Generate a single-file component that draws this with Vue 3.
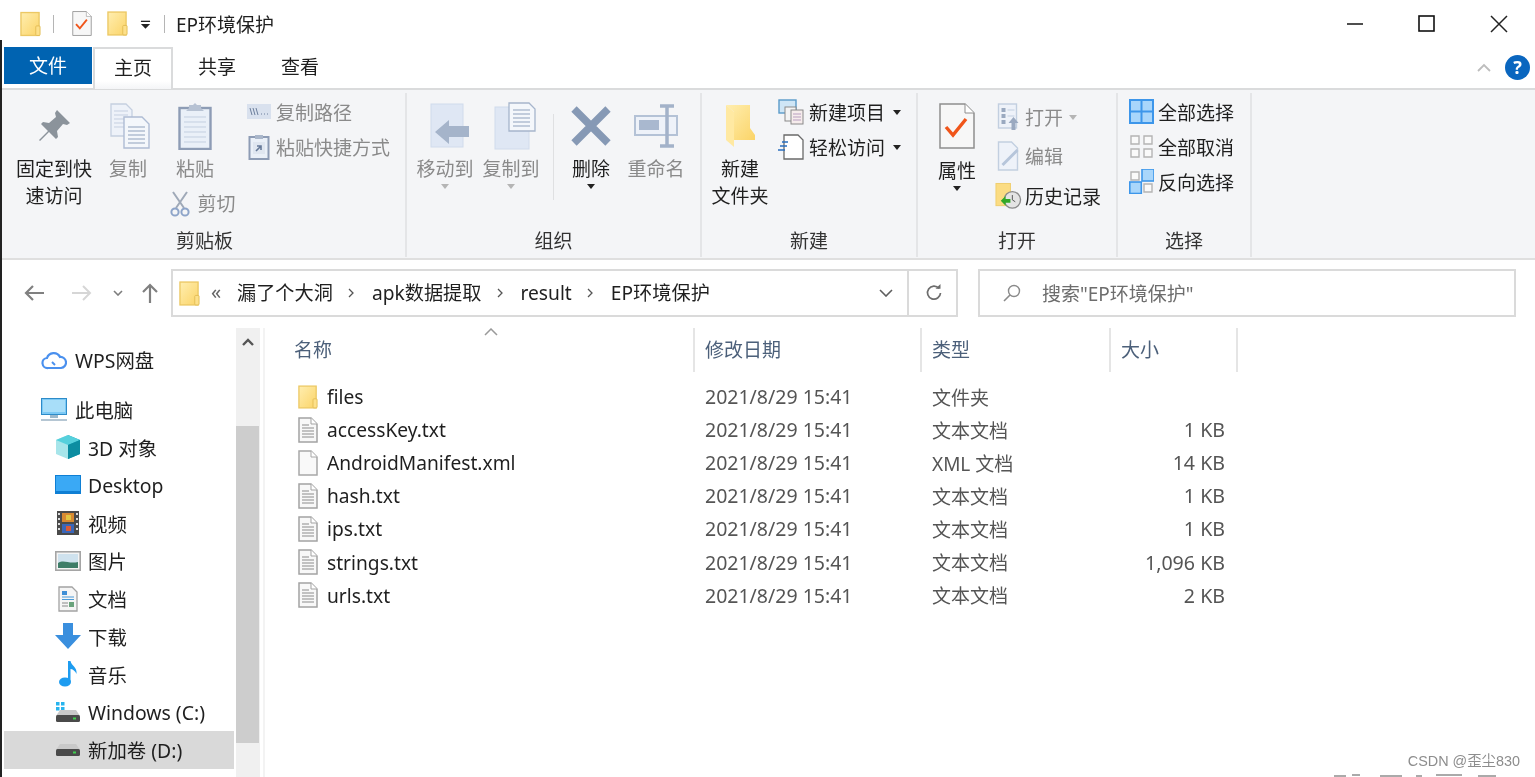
<template>
  <div class="explorer">
    <svg class="defs" width="0" height="0">
      <defs>
        <linearGradient id="folderFill" x1="0" y1="0" x2="1" y2="1">
          <stop offset="0" stop-color="#ffeeb0" />
          <stop offset="1" stop-color="#fbd468" />
        </linearGradient>
        <symbol id="folder" viewBox="0 0 22 26">
          <rect x="1" y="1" width="19" height="24" fill="url(#folderFill)" stroke="#ecc864" stroke-width="1.4" />
          <rect x="16.5" y="15" width="4.5" height="10" rx="1" fill="#fde08a" stroke="#e3bd55" stroke-width="1" />
        </symbol>
        <symbol id="textfile" viewBox="0 0 20 26">
          <path d="M1 1h12l6 6v18H1z" fill="#f8f8f8" stroke="#a3a3a3" stroke-width="1.5" />
          <path d="M13 1v6h6" fill="#fff" stroke="#a3a3a3" />
          <path d="M4 8h7M4 11h12M4 14h12M4 17h12M4 20h12" stroke="#8b8b8b" stroke-width="1.2" />
        </symbol>
        <symbol id="blankfile" viewBox="0 0 20 26">
          <path d="M1 1h12l6 6v18H1z" fill="#f9f9f9" stroke="#a8a8a8" stroke-width="1.5" />
          <path d="M13 1v6h6" fill="#fff" stroke="#a8a8a8" />
        </symbol>
        <symbol id="propsheet" viewBox="0 0 36 46">
          <path d="M1 1h25l9 9v35H1z" fill="#f7f7f7" stroke="#8e8e8e" stroke-width="1.5" />
          <path d="M26 1v9h9" fill="#fff" stroke="#8e8e8e" />
          <path d="M7 24l7 8L27 16" fill="none" stroke="#f0551a" stroke-width="3.4" />
        </symbol>
        <symbol id="drive" viewBox="0 0 26 14">
          <path d="M5 1h16l4 6H1z" fill="#c9c9c9" />
          <rect x="1" y="6" width="24" height="7" rx="1.5" fill="#4a4a4a" />
          <rect x="18" y="8.5" width="3" height="2" fill="#3ecf4e" />
        </symbol>
      </defs>
    </svg>

    <header class="titlebar">
      <div class="qat">
        <svg class="ic-folder-qat"><use href="#folder" /></svg>
        <i class="qat-sep"></i>
        <svg class="ic-prop-qat"><use href="#propsheet" /></svg>
        <svg class="ic-folder-qat2"><use href="#folder" /></svg>
        <svg class="ic-qat-more" viewBox="0 0 12 10"><path d="M1 1h10" stroke="#222" stroke-width="1.4" /><path d="M1 4h10L6 9z" fill="#222" /></svg>
        <i class="qat-sep second"></i>
        <span class="win-title">EP环境保护</span>
      </div>
      <div class="win-btns">
        <svg viewBox="0 0 24 24"><path d="M0 12h16" stroke="#222" stroke-width="1.6" /></svg>
        <svg viewBox="0 0 24 24"><rect x="4" y="4" width="15" height="15" fill="none" stroke="#111" stroke-width="1.6" /></svg>
        <svg viewBox="0 0 24 24"><path d="M4 4l16 16M20 4L4 20" stroke="#222" stroke-width="1.5" /></svg>
      </div>
    </header>

    <nav class="tabs">
      <span class="tab-file">文件</span>
      <span class="tab-home">主页</span>
      <span class="tab-share">共享</span>
      <span class="tab-view">查看</span>
      <div class="tabs-right">
        <svg class="ic-collapse" viewBox="0 0 16 10"><path d="M2 8l6-6 6 6" fill="none" stroke="#bdbdbd" stroke-width="1.8" /></svg>
        <span class="help">?</span>
      </div>
    </nav>

    <section class="ribbon">
      <div class="group g-clipboard">
        <div class="group-body">
          <div class="big b-pin">
            <div class="big-icon">
              <svg width="36" height="36" viewBox="0 0 36 36"><path d="M21 2l13 13-3 2-4-1-6 7 1 6-2 2-7-7-9 9-1-1 9-9-7-7 2-2 6 1 7-6-1-4z" fill="#8b939b" /></svg>
            </div>
            <span>固定到快<br />速访问</span>
          </div>
          <div class="big b-copy off">
            <div class="big-icon">
              <svg width="40" height="46" viewBox="0 0 40 46">
                <path d="M1 1h15l6 6v26H1z" fill="#eef2f9" stroke="#c5cfe0" stroke-width="1.3" />
                <path d="M4 8h14M4 12h14M4 16h14M4 20h14M4 24h14" stroke="#c5cfe0" />
                <path d="M14 14h18l7 7v24H14z" fill="#f4f7fb" stroke="#aebcd4" stroke-width="1.4" />
                <path d="M18 24h17M18 28h17M18 32h17M18 36h17M18 40h17" stroke="#8fa1bc" />
              </svg>
            </div>
            <span>复制</span>
          </div>
          <div class="big b-paste off">
            <div class="big-icon">
              <svg width="34" height="48" viewBox="0 0 34 48">
                <rect x="1.5" y="6" width="31" height="41" fill="#eaf0f8" stroke="#8d9cb5" stroke-width="2.4" />
                <path d="M11 6V3h4l2-2 2 2h4v3l3 3H8z" fill="#b7c2d3" />
                <path d="M6 15h22M6 20h22M6 25h22M6 30h22M6 35h22M6 40h22" stroke="#c3cfe0" />
              </svg>
            </div>
            <span>粘贴</span>
            <div class="cut">
              <svg width="20" height="26" viewBox="0 0 20 26">
                <path d="M3 1l11 16M17 1L6 17" stroke="#9fa9b8" stroke-width="2" />
                <circle cx="5" cy="21" r="3.6" fill="none" stroke="#8da4c9" stroke-width="2" />
                <circle cx="15" cy="21" r="3.6" fill="none" stroke="#8da4c9" stroke-width="2" />
              </svg>
              <span>剪切</span>
            </div>
          </div>
          <div class="small-col col-clip off">
            <div class="mini">
              <svg width="24" height="16" viewBox="0 0 24 16"><rect width="24" height="15" fill="#d9e1ee" /><path d="M3 4l2 7M6 4l2 7M9 4l2 7" stroke="#6d7f9c" /><path d="M14 10h1M17 10h1M20 10h1" stroke="#6d7f9c" /></svg>
              <span>复制路径</span>
            </div>
            <div class="mini">
              <svg width="22" height="26" viewBox="0 0 22 26"><rect x="1.5" y="3" width="19" height="22" fill="#eaf0f8" stroke="#8d9cb5" stroke-width="2" /><rect x="7" y="1" width="8" height="4" fill="#a9b6ca" /><rect x="5" y="8" width="12" height="12" fill="#dfe6f0" /><path d="M8 17l5-5M9 12h4v4" stroke="#667a99" stroke-width="1.6" fill="none" /></svg>
              <span>粘贴快捷方式</span>
            </div>
          </div>
        </div>
        <div class="group-label">剪贴板</div>
      </div>

      <div class="group g-organize">
        <div class="group-body">
          <div class="big b-move off">
            <div class="big-icon">
              <svg width="42" height="46" viewBox="0 0 42 46">
                <rect x="1" y="1" width="32" height="43" fill="#dfe7f4" stroke="#d0dbec" />
                <path d="M20 21v6h20v11H20v7L6 33z" transform="translate(-1 -4)" fill="#a5b4ca" />
              </svg>
            </div>
            <span>移动到</span>
            <i class="caret grey"></i>
          </div>
          <div class="big b-copyto off">
            <div class="big-icon">
              <svg width="42" height="48" viewBox="0 0 42 48">
                <rect x="1" y="5" width="34" height="42" fill="#dfe7f4" stroke="#d0dbec" />
                <path d="M15 1h20l6 6v22H15z" fill="#f4f7fb" stroke="#a6b5cc" stroke-width="1.3" />
                <path d="M19 8h17M19 12h17M19 16h17M19 20h17M19 24h17" stroke="#8fa1bc" />
              </svg>
            </div>
            <span>复制到</span>
            <i class="caret grey"></i>
          </div>
          <i class="vsep"></i>
          <div class="big b-delete">
            <div class="big-icon">
              <svg width="42" height="42" viewBox="0 0 42 42"><path d="M4 4l34 34M38 4L4 38" stroke="#8699b5" stroke-width="7.5" /></svg>
            </div>
            <span>删除</span>
            <i class="caret"></i>
          </div>
          <div class="big b-rename off">
            <div class="big-icon">
              <svg width="46" height="44" viewBox="0 0 46 44">
                <rect x="2" y="12" width="42" height="19" fill="#eef2f9" stroke="#b4c2d6" stroke-width="2" />
                <rect x="6" y="16" width="20" height="10" fill="#a9b8cf" />
                <path d="M27 2h14M27 42h14M34 2v40" stroke="#a3b2c9" stroke-width="3.5" />
              </svg>
            </div>
            <span>重命名</span>
          </div>
        </div>
        <div class="group-label">组织</div>
      </div>

      <div class="group g-new">
        <div class="group-body">
          <div class="big b-newfolder">
            <div class="big-icon">
              <svg width="31" height="44" viewBox="0 0 31 44">
                <path d="M1 1h24v23l5 7v5H9V8z" fill="url(#folderFill)" />
                <path d="M1 1l8 7v35l-8-7z" fill="#ffe9a2" />
              </svg>
            </div>
            <span>新建<br />文件夹</span>
          </div>
          <div class="small-col col-new">
            <div class="mini">
              <svg width="26" height="26" viewBox="0 0 26 26">
                <rect x="1" y="1" width="17" height="13" fill="#cfe6f6" stroke="#5a9bc9" stroke-width="1.4" />
                <rect x="7" y="8" width="11" height="14" fill="#f4f4f4" stroke="#8a8a8a" />
                <rect x="13" y="11" width="12" height="14" fill="#f6ecec" stroke="#8a8a8a" />
                <path d="M15 15h8M15 18h8M15 21h8" stroke="#b89ec0" />
              </svg>
              <span>新建项目</span>
              <i class="caret inline"></i>
            </div>
            <div class="mini">
              <svg width="26" height="26" viewBox="0 0 26 26">
                <path d="M6 1h14l5 5v19H6z" fill="#fff" stroke="#6a6a6a" stroke-width="1.3" />
                <path d="M4 8h6M2 12h7M0 16h7" stroke="#2a6fc0" stroke-width="1.5" />
              </svg>
              <span>轻松访问</span>
              <i class="caret inline"></i>
            </div>
          </div>
        </div>
        <div class="group-label">新建</div>
      </div>

      <div class="group g-open">
        <div class="group-body">
          <div class="big b-props">
            <div class="big-icon">
              <svg width="36" height="46"><use href="#propsheet" /></svg>
            </div>
            <span>属性</span>
            <i class="caret"></i>
          </div>
          <div class="small-col col-open">
            <div class="mini off">
              <svg width="22" height="28" viewBox="0 0 22 28">
                <rect x="1" y="1" width="18" height="24" fill="#eef2f9" stroke="#c2cfe0" stroke-width="1.4" />
                <path d="M4 5h4v4H4zM4 11h4v4H4zM4 17h4v4H4z" fill="#9aa9c0" />
                <path d="M10 7h7M10 13h7" stroke="#c2cfe0" />
                <path d="M16 14l5 6h-3v7h-4v-7h-3z" fill="#9aa9c0" />
              </svg>
              <span>打开</span>
              <i class="caret inline grey"></i>
            </div>
            <div class="mini off">
              <svg width="22" height="30" viewBox="0 0 22 30">
                <path d="M1 1h13l6 6v22H1z" fill="#eef2f9" stroke="#c2cfe0" stroke-width="1.4" />
                <path d="M5 24L20 9" stroke="#b6c5da" stroke-width="3" />
              </svg>
              <span>编辑</span>
            </div>
            <div class="mini">
              <svg class="hist" width="28" height="28" viewBox="0 0 28 28">
                <rect x="1" y="1" width="15" height="23" fill="#fbdc83" stroke="#efcd6d" />
                <circle cx="18" cy="18" r="8.5" fill="#e4e4e4" stroke="#8a8a8a" stroke-width="1.4" />
                <path d="M18 13v5l3 2" stroke="#555" fill="none" />
                <path d="M6 19l5-5v3h5v4h-5v3z" fill="#32a928" />
              </svg>
              <span>历史记录</span>
            </div>
          </div>
        </div>
        <div class="group-label">打开</div>
      </div>

      <div class="group g-select">
        <div class="group-body">
          <div class="small-col col-select">
            <div class="mini">
              <svg width="25" height="25" viewBox="0 0 25 25"><rect width="25" height="25" fill="#3d96ea" /><path d="M2 2h9.500v9.500H2zM13.500 2H23v9.500h-9.500zM2 13.500h9.500V23H2zM13.500 13.500H23V23h-9.500z" fill="#a9d6fb" /></svg>
              <span>全部选择</span>
            </div>
            <div class="mini">
              <svg width="25" height="25" viewBox="0 0 25 25"><path d="M2 2h8v8H2zM15 2h8v8h-8zM2 15h8v8H2zM15 15h8v8h-8z" fill="#fafafa" stroke="#b4b4b4" stroke-width="1.4" /></svg>
              <span>全部取消</span>
            </div>
            <div class="mini">
              <svg width="25" height="25" viewBox="0 0 25 25">
                <path d="M2 3h8v8H2zM15 15h8v8h-8z" fill="#fafafa" stroke="#b4b4b4" stroke-width="1.4" />
                <rect x="13" y="0" width="12" height="12" fill="#a9d6fb" stroke="#3d96ea" stroke-width="1.6" />
                <rect x="0.800" y="13" width="11.500" height="11.500" fill="#a9d6fb" stroke="#3d96ea" stroke-width="1.6" />
              </svg>
              <span>反向选择</span>
            </div>
          </div>
        </div>
        <div class="group-label">选择</div>
      </div>
    </section>

    <div class="navbar">
      <div class="nav-arrows">
        <svg class="a-back" viewBox="0 0 20 18"><path d="M9 2L2 9l7 7M2 9h18" fill="none" stroke="#808080" stroke-width="2.200" /></svg>
        <svg class="a-fwd" viewBox="0 0 20 18"><path d="M11 2l7 7-7 7M18 9H0" fill="none" stroke="#d6d6d6" stroke-width="2" /></svg>
        <svg class="a-recent" viewBox="0 0 10 6"><path d="M1 1l4 4 4-4" fill="none" stroke="#7d7d7d" stroke-width="1.600" /></svg>
        <svg class="a-up" viewBox="0 0 18 20"><path d="M2 9l7-7 7 7M9 2v18" fill="none" stroke="#808080" stroke-width="2.200" /></svg>
      </div>
      <div class="address">
        <svg class="addr-folder"><use href="#folder" /></svg>
        <span class="crumb-more">«</span>
        <template v-for="(c, i) in crumbs" :key="c">
          <span class="crumb">{{ c }}</span>
          <svg v-if="i < crumbs.length - 1" class="crumb-sep" viewBox="0 0 6 10"><path d="M1 1l4 4-4 4" fill="none" stroke="#555" stroke-width="1.300" /></svg>
        </template>
        <div class="addr-right">
          <svg class="addr-drop" viewBox="0 0 14 8"><path d="M1 1l6 6 6-6" fill="none" stroke="#5e5e5e" stroke-width="1.600" /></svg>
          <i class="addr-line"></i>
          <svg class="addr-refresh" viewBox="0 0 18 18"><path d="M14 4.500A6.500 6.500 0 1 0 15.500 9" fill="none" stroke="#6d6d6d" stroke-width="1.700" /><path d="M10.500 4.800h5V0z" fill="#6d6d6d" /></svg>
        </div>
      </div>
      <div class="search">
        <svg viewBox="0 0 20 20"><circle cx="12" cy="8" r="5.500" fill="none" stroke="#8a8a8a" stroke-width="1.400" /><path d="M8 12l-6 6" stroke="#8a8a8a" stroke-width="1.600" /></svg>
        <span>搜索"EP环境保护"</span>
      </div>
    </div>

    <div class="main">
      <aside class="sidebar">
        <ul class="tree">
          <li v-for="item in navItems" :key="item.label" :class="['tree-row', item.cls]">
            <span class="tree-icon" v-html="item.icon"></span>
            <span>{{ item.label }}</span>
          </li>
        </ul>
        <div class="scrollbar">
          <svg class="sb-up" viewBox="0 0 14 10"><path d="M2 8l5-5 5 5" fill="none" stroke="#555" stroke-width="2.400" /></svg>
          <div class="sb-thumb"></div>
        </div>
      </aside>

      <section class="files">
        <div class="file-head">
          <div class="col-name">名称
            <svg class="sort-up" viewBox="0 0 14 8"><path d="M1 7l6-6 6 6" fill="none" stroke="#9a9a9a" stroke-width="1.500" /></svg>
          </div>
          <div class="col-date">修改日期</div>
          <div class="col-type">类型</div>
          <div class="col-size">大小</div>
        </div>
        <div v-for="f in files" :key="f.name" class="file-row">
          <div class="f-name">
            <svg class="f-icon"><use :href="'#' + f.icon" /></svg>
            <span class="f-label">{{ f.name }}</span>
          </div>
          <div class="f-date">2021/8/29 15:41</div>
          <div class="f-type">{{ f.type }}</div>
          <div class="f-size">{{ f.size }}</div>
        </div>
      </section>
    </div>

    <svg class="cut-off" viewBox="0 0 180 4">
      <path d="M2 3h12M20 2h8M48 3h22M84 3h6M104 2h26M146 3h18" stroke="#8f8f8f" stroke-width="1.500" />
    </svg>
    <div class="watermark">CSDN @歪尘830</div>
  </div>
</template>

<script setup>
const crumbs = ['漏了个大洞', 'apk数据提取', 'result', 'EP环境保护']

const files = [
  { name: 'files', icon: 'folder', type: '文件夹', size: '' },
  { name: 'accessKey.txt', icon: 'textfile', type: '文本文档', size: '1 KB' },
  { name: 'AndroidManifest.xml', icon: 'blankfile', type: 'XML 文档', size: '14 KB' },
  { name: 'hash.txt', icon: 'textfile', type: '文本文档', size: '1 KB' },
  { name: 'ips.txt', icon: 'textfile', type: '文本文档', size: '1 KB' },
  { name: 'strings.txt', icon: 'textfile', type: '文本文档', size: '1,096 KB' },
  { name: 'urls.txt', icon: 'textfile', type: '文本文档', size: '2 KB' }
]

// sidebar icons are static markup, so v-html keeps the template short
const navItems = [
  {
    label: 'WPS网盘',
    cls: 'top cloud',
    icon: '<svg width="26" height="20" viewBox="0 0 26 20"><path d="M7 18a5 5 0 0 1-1-10 7 7 0 0 1 13-1 5.500 5.500 0 0 1 1 11z" fill="#fff" stroke="#4a90ee" stroke-width="2.200"/><path d="M11 12l3 3" stroke="#4a90ee" stroke-width="2"/></svg>'
  },
  {
    label: '此电脑',
    cls: 'top pc',
    icon: '<svg width="26" height="24" viewBox="0 0 26 24"><rect x="0.500" y="0.500" width="25" height="16" fill="#7cc9f5" stroke="#2d8bc8"/><rect x="2" y="2" width="22" height="12" fill="#a8def9"/><rect x="9" y="17" width="8" height="3" fill="#9bb8cc"/><rect x="0" y="21" width="26" height="2" fill="#b5c6d3"/></svg>'
  },
  {
    label: '3D 对象',
    icon: '<svg width="26" height="26" viewBox="0 0 26 26"><path d="M13 1l12 5v14l-12 5z" fill="#14a3b8"/><path d="M13 1L1 6v14l12 5z" fill="#a7e5ea"/><path d="M1 6l12-5 12 5-12 5z" fill="#56d0dc"/><path d="M13 11l12-5v14l-12 5z" fill="#0c8da1"/></svg>'
  },
  {
    label: 'Desktop',
    icon: '<svg width="26" height="20" viewBox="0 0 26 20"><rect width="26" height="19" fill="#0f7fd4"/><rect x="1" y="1" width="24" height="15" fill="#3aa9f5"/></svg>'
  },
  {
    label: '视频',
    icon: '<svg width="22" height="24" viewBox="0 0 22 24"><rect width="22" height="24" fill="#4a4a4a"/><path d="M1 2h2v2H1zM1 7h2v2H1zM1 12h2v2H1zM1 17h2v2H1zM19 2h2v2h-2zM19 7h2v2h-2zM19 12h2v2h-2zM19 17h2v2h-2z" fill="#ddd"/><rect x="5" y="2" width="12" height="9" fill="#d88a32"/><rect x="5" y="13" width="12" height="9" fill="#3a66b8"/><rect x="9" y="4" width="5" height="5" fill="#e2c542"/><rect x="9" y="15" width="5" height="5" fill="#d75a3a"/></svg>'
  },
  {
    label: '图片',
    icon: '<svg width="26" height="20" viewBox="0 0 26 20"><rect x="0.800" y="0.800" width="24.400" height="18.400" fill="#f4f4f4" stroke="#a5a5a5" stroke-width="1.600"/><rect x="3" y="3" width="20" height="14" fill="#cfe2ee"/><path d="M3 12c6-4 10 1 20-1v6H3z" fill="#3e7d68"/></svg>'
  },
  {
    label: '文档',
    icon: '<svg width="20" height="26" viewBox="0 0 20 26"><path d="M1 1h13l5 5v19H1z" fill="#f5f5f5" stroke="#a3a3a3" stroke-width="1.300"/><path d="M4 5h5v4H4z" fill="#3f8fd6"/><path d="M4 11h12M4 13.500h12" stroke="#4a9ad8"/><path d="M4 17h6M4 20h6" stroke="#888"/><rect x="11" y="16" width="5" height="5" fill="#6aa37c"/></svg>'
  },
  {
    label: '下载',
    icon: '<svg width="26" height="26" viewBox="0 0 26 26"><path d="M8 0h10v12h8L13 26 0 12h8z" fill="#3a8fde"/></svg>'
  },
  {
    label: '音乐',
    icon: '<svg width="20" height="26" viewBox="0 0 20 26"><ellipse cx="7" cy="21" rx="6" ry="4.500" fill="#1e9cf0"/><path d="M10 0h2.500c1 5 7 6 6 13-1-3-4-5-6-5v13H10z" fill="#1e9cf0"/></svg>'
  },
  {
    label: 'Windows (C:)',
    icon: '<svg width="26" height="22" viewBox="0 0 26 22"><path d="M1 1h3.500v3.500H1zM6 1h3.500v3.500H6zM1 6h3.500v3.500H1zM6 6h3.500v3.500H6z" fill="#27b4ee"/><g transform="translate(0 8)"><path d="M5 1h16l4 6H1z" fill="#c9c9c9"/><rect x="1" y="6" width="24" height="7" rx="1.500" fill="#4a4a4a"/><rect x="18" y="8.500" width="3" height="2" fill="#3ecf4e"/></g></svg>'
  },
  {
    label: '新加卷 (D:)',
    cls: 'selected',
    icon: '<svg width="26" height="14" viewBox="0 0 26 14"><use href="#drive"/></svg>'
  }
]
</script>

<style>
html, body { margin: 0; background: #fff; overflow: hidden; }
</style>

<style scoped>
.explorer {
  position: relative;
  width: 1535px;
  height: 777px;
  overflow: hidden;
  background: #fff;
  color: #1f1f1f;
  font-family: "Noto Sans", "Noto Sans CJK SC", sans-serif;
  font-size: 19px;
  filter: blur(0.6px);
}
.explorer::before {
  content: "";
  position: absolute;
  left: 0;
  top: 40px;
  bottom: 0;
  width: 2px;
  background: #222;
  z-index: 2;
}
.defs { position: absolute; }

/* title bar */
.titlebar {
  height: 47px;
  display: flex;
  justify-content: space-between;
  align-items: center;
}
.qat { display: flex; align-items: center; padding-left: 20px; }
.ic-folder-qat { width: 21px; height: 26px; }
.qat-sep { width: 1px; height: 18px; background: #b5b5b5; margin-left: 12px; }
.qat-sep.second { margin-left: 13px; }
.ic-prop-qat { width: 20px; height: 25px; margin-left: 18px; }
.ic-folder-qat2 { width: 21px; height: 25px; margin-left: 15px; }
.ic-qat-more { width: 11px; height: 10px; margin-left: 12px; margin-top: 2px; }
.win-title { margin-left: 11px; font-size: 19px; }
.win-btns { display: flex; gap: 46px; padding-right: 24px; }
.win-btns svg { width: 24px; height: 24px; }
.win-btns svg:nth-child(2) { margin: 0 2px 0 -2px; }

/* tabs */
.tabs {
  height: 43px;
  display: flex;
  box-sizing: border-box;
  padding-left: 4px;
  position: relative;
  border-bottom: 2px solid #dadbdc;
  line-height: 38px;
}
.tab-file {
  width: 88px;
  height: 37px;
  background: #0063b1;
  color: #fff;
  text-align: center;
}
.tab-home {
  width: 80px;
  height: 42px;
  margin-left: 1px;
  box-sizing: border-box;
  text-align: center;
  border: 2px solid #dadbdc;
  border-bottom: none;
  background: linear-gradient(#fff, #fff 80%, #f4f5f7);
  line-height: 38px;
}
.tab-share { margin-left: 25px; line-height: 40px; }
.tab-view { margin-left: 45px; line-height: 40px; }
.tabs-right {
  margin-left: auto;
  display: flex;
  align-items: center;
  gap: 13px;
  padding-right: 5px;
  height: 41px;
}
.ic-collapse { width: 16px; height: 10px; }
.help {
  width: 25px;
  height: 25px;
  border-radius: 50%;
  background: #0a66bf;
  color: #fff;
  font-weight: 700;
  font-size: 18px;
  line-height: 25px;
  text-align: center;
}

/* ribbon */
.ribbon {
  height: 170px;
  box-sizing: border-box;
  padding-left: 4px;
  display: flex;
  background: #f4f5f7;
  border-bottom: 2px solid #dfdfdf;
}
.group {
  display: flex;
  flex-direction: column;
  box-sizing: border-box;
  margin: 3px 0 1px;
  border-right: 2px solid #e4e5e7;
  flex: none;
}
.g-clipboard { width: 403px; }
.g-organize { width: 295px; }
.g-new { width: 216px; }
.g-open { width: 200px; }
.g-select { width: 134px; }
.group-body { flex: 1; display: flex; min-height: 0; }
.group-label {
  height: 30px;
  line-height: 30px;
  text-align: center;
  color: #333;
  margin-bottom: 1px;
}
.big {
  display: flex;
  flex-direction: column;
  align-items: center;
  text-align: center;
  line-height: 27px;
  padding-top: 7px;
  flex: none;
  position: relative;
}
.big-icon {
  height: 52px;
  margin-bottom: 4px;
  display: flex;
  align-items: center;
  justify-content: center;
}
.off { color: #8a8a8a; }
.small-col { display: flex; flex-direction: column; padding-top: 1px; flex: none; }
.mini {
  height: 35px;
  display: flex;
  align-items: center;
  gap: 5px;
}
.b-pin { width: 80px; margin-left: 10px; }
.b-copy { width: 68px; }
.b-copy svg { margin-left: 4px; }
.b-paste { width: 66px; }
.cut {
  display: flex;
  align-items: center;
  gap: 7px;
  margin-top: 6px;
  height: 30px;
  white-space: nowrap;
  flex: none;
  position: relative;
  left: 8px;
}
.cut svg { flex: none; }
.col-clip { margin-left: 19px; }
.g-clipboard .mini svg { width: 24px; }
.b-move { width: 66px; margin-left: 5px; }
.b-move svg { margin-left: 12px; }
.b-copyto { width: 66px; }
.b-copyto svg { margin-left: 8px; }
.vsep {
  flex: none;
  width: 1px;
  height: 86px;
  margin: 21px 0 0 9px;
  background: #dfe0e2;
}
.b-delete { width: 66px; margin-left: 4px; }
.b-rename { width: 64px; }
.b-newfolder { width: 70px; margin-left: 3px; }
.col-new { margin-left: 3px; }
.b-props { width: 66px; margin-left: 6px; }
.b-props .big-icon { margin-bottom: 6px; }
.col-open { padding-top: 4px; margin-left: 5px; }
.col-open .mini { height: 39.5px; gap: 3px; }
.col-open .mini svg { width: 27px; }
.col-select { margin-left: 11px; }
.col-select .mini { gap: 4px; }

.caret {
  width: 0;
  height: 0;
  border-left: 4.5px solid transparent;
  border-right: 4.5px solid transparent;
  border-top: 5px solid #222;
  margin-top: 1px;
}
.caret.grey { border-top-color: #b5b5b5; }
.caret.inline { margin-left: 3px; }

/* nav bar */
.navbar {
  height: 68px;
  display: flex;
  align-items: flex-start;
  box-sizing: border-box;
  padding-top: 9px;
}
.nav-arrows {
  width: 171px;
  flex: none;
  height: 48px;
  display: flex;
  align-items: center;
  box-sizing: border-box;
  padding-left: 24px;
}
.a-back { width: 20px; height: 18px; }
.a-fwd { width: 20px; height: 18px; margin-left: 28px; }
.a-recent { width: 10px; height: 6px; margin-left: 21px; }
.a-up { width: 18px; height: 20px; margin-left: 18px; }
.address {
  width: 787px;
  height: 48px;
  flex: none;
  box-sizing: border-box;
  border: 2px solid #dadada;
  display: flex;
  align-items: center;
  padding-left: 6px;
}
.addr-folder { width: 21px; height: 25px; }
.crumb-more { margin-left: 11px; color: #666; width: 26px; font-size: 20px; margin-top: -3px; }
.crumb { font-size: 19.2px; margin-top: -2px; }
.crumb-sep { width: 6px; height: 10px; margin: 0 18px 0 15px; }
.addr-right { margin-left: auto; display: flex; align-items: center; height: 100%; }
.addr-drop { width: 14px; height: 8px; margin-right: 14px; }
.addr-line { width: 2px; height: 100%; background: #dadada; }
.addr-refresh { width: 18px; height: 18px; margin: 0 13px 0 16px; }
.search {
  width: 538px;
  height: 48px;
  flex: none;
  margin-left: 20px;
  box-sizing: border-box;
  border: 2px solid #dadada;
  display: flex;
  align-items: center;
  padding-left: 22px;
  color: #6d6d6d;
  font-size: 19px;
}
.search svg { width: 20px; height: 20px; margin-right: 20px; }

/* sidebar */
.main { display: flex; height: 449px; }
.sidebar {
  width: 265px;
  flex: none;
  display: flex;
  box-sizing: border-box;
  border-right: 2px solid #f3f3f3;
  padding-left: 4px;
}
.tree {
  list-style: none;
  margin: 0 2px 0 0;
  padding: 13px 0 0;
  width: 230px;
  flex: none;
}
.tree-row {
  height: 37.8px;
  display: flex;
  align-items: center;
  padding-left: 84px;
  position: relative;
  font-size: 19.4px;
}
.tree-row.top { padding-left: 71px; }
.tree-row.pc { margin-top: 12px; }
.tree-row.selected { background: #d9d9d9; }
.tree-icon {
  position: absolute;
  left: 50px;
  top: 50%;
  transform: translateY(-50%);
  width: 28px;
  display: flex;
  justify-content: center;
}
.top .tree-icon { left: 36px; }
.scrollbar {
  width: 24px;
  flex: none;
  background: #f0f0f0;
  position: relative;
}
.sb-up { position: absolute; left: 5px; top: 9px; width: 14px; height: 10px; }
.sb-thumb {
  position: absolute;
  left: 0;
  right: 1px;
  top: 98px;
  height: 317px;
  background: #cdcdcd;
}

/* file list */
.files { flex: 1; min-width: 0; padding-left: 29px; }
.file-head, .file-row {
  display: grid;
  grid-template-columns: 401px 227px 189px 127px;
}
.file-head {
  height: 44px;
  line-height: 44px;
  color: #4c607a;
  margin-bottom: 8px;
}
.file-head > div {
  box-sizing: border-box;
  border-right: 2px solid #e5e5e5;
  padding-left: 10px;
  position: relative;
}
.file-head .col-name { padding-left: 0; }
.sort-up { position: absolute; left: 190px; top: 0; width: 14px; height: 8px; }
.file-row {
  height: 33.1px;
  align-items: center;
}
.f-name { display: flex; align-items: center; padding-left: 4px; }
.f-icon { width: 20px; height: 26px; flex: none; }
.f-label { margin-left: 9px; font-size: 19.2px; }
.f-date { padding-left: 10px; color: #555; font-size: 19.5px; }
.f-type { padding-left: 10px; color: #555; font-size: 19px; }
.f-size { text-align: right; padding-right: 13px; color: #555; font-size: 19.6px; }

/* tops of a second, cropped watermark line at the very bottom */
.cut-off {
  position: absolute;
  left: 1332px;
  bottom: 0;
  width: 180px;
  height: 4px;
}
.watermark {
  position: absolute;
  right: 15px;
  top: 752px;
  font-size: 14.4px;
  line-height: 18px;
  color: #8d8d8d;
  font-family: "Liberation Sans", "Noto Sans CJK SC", sans-serif;
}
</style>
